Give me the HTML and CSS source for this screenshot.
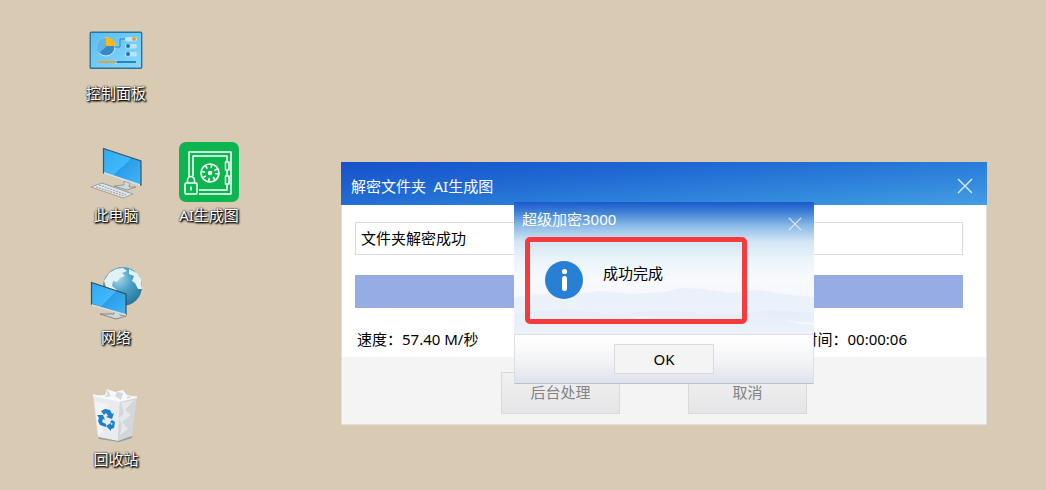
FILE: index.html
```html
<!DOCTYPE html>
<html lang="zh-CN">
<head>
  <meta charset="UTF-8">
  <meta name="viewport" content="width=device-width, initial-scale=1.0">
  <title>超级加密3000</title>
  <link rel="stylesheet" href="styles.css">
</head>
<body>
  <!-- Desktop icons -->
  <main class="desktop">
    <a class="shortcut first-col" href="#control-panel">
      <svg viewBox="0 0 60 60" aria-hidden="true">
        <defs>
          <linearGradient id="panel" x1="0" y1="0" x2="1" y2="1">
            <stop offset="0" stop-color="#58bdf0"/>
            <stop offset="1" stop-color="#8bd8fc"/>
          </linearGradient>
        </defs>
        <rect x="4.200" y="12.200" width="51.500" height="36" rx="1" fill="url(#panel)" stroke="#26749f" stroke-width="1.400"/>
        <circle cx="20" cy="27" r="9" fill="#3589c5" stroke="#c8e9fa"/>
        <path d="M20 27V18A9 9 0 0 0 13 33Z" fill="#62b3e4"/>
        <path d="M20 26V17A9.500 9.500 0 0 1 29.500 26Z" fill="#ffb719"/>
        <path d="M29 27H34V19H40" fill="none" stroke="#2f88b9"/>
        <rect x="39" y="17" width="12" height="4.500" rx="2" fill="#b8e6fc"/>
        <rect x="39" y="24" width="12" height="4.500" rx="2" fill="#b8e6fc"/>
        <rect x="39" y="32" width="12" height="4.500" rx="2" fill="#b8e6fc"/>
        <circle cx="48" cy="19" r="2" fill="#ef9a26"/>
        <circle cx="42" cy="26" r="2" fill="#23719d"/>
        <circle cx="42" cy="34" r="2" fill="#23719d"/>
        <path d="M12 42H50" stroke="#2685ba" stroke-width="2"/>
        <path d="M12 42H29" stroke="#dda345" stroke-width="2"/>
        <path d="M30 40V44" stroke="#c2eafd"/>
      </svg>
      <span>控制面板</span>
    </a>

    <a class="shortcut first-col" href="#computer">
      <svg viewBox="0 0 60 60" aria-hidden="true">
        <defs>
          <linearGradient id="screen" x1="0" y1="0" x2="1" y2="1">
            <stop offset="0" stop-color="#2caaf5"/>
            <stop offset="0.5" stop-color="#42b7fb"/>
            <stop offset="0.5" stop-color="#299de9"/>
            <stop offset="1" stop-color="#46b5f5"/>
          </linearGradient>
        </defs>
        <path d="M38 39L44 41L43 45L50 45L41 48L28 44L38 43Z" fill="#d1d7da" stroke="#7b858b" stroke-width=".7"/>
        <path d="M17.500 6.500L55 19V43L17.500 31Z" fill="url(#screen)" stroke="#375768" stroke-width="1.200"/>
        <path d="M18 32L54 44V42L18 30Z" fill="#d5e2e9"/>
        <path d="M16 41L47 52L37 56L5 45Z" fill="#e4e7e9" stroke="#8b959b" stroke-width=".8"/>
        <path d="M13 43L41 53M10 45L38 54M16 41L44 51" stroke="#9da6ab" stroke-width="1.200" stroke-dasharray="2 1"/>
      </svg>
      <span>此电脑</span>
    </a>

    <a class="shortcut" href="#folder">
      <svg viewBox="0 0 60 60" aria-hidden="true">
        <rect width="60" height="60" rx="7" fill="#0cb550"/>
        <g fill="none" stroke="#fff" stroke-width="1.500" stroke-linejoin="round">
          <path d="M10 35V10H52V52H20M14 34V14H48V48H20"/>
          <path d="M8.500 41V38A3.500 3.500 0 0 1 15.500 38V41"/>
          <rect x="6" y="41" width="12" height="11" rx="1"/>
          <path d="M12 44.500V48.500"/>
          <circle cx="31" cy="31" r="9" stroke-width="1.600"/>
          <circle cx="31" cy="31" r="6.500" stroke-width="3" stroke-dasharray="1.500 3.600"/>
          <circle cx="31" cy="31" r="1.500" fill="#fff"/>
          <path d="M46.500 20H50V28H46.500ZM46.500 34H50V42H46.500Z" fill="#0cb550"/>
        </g>
      </svg>
      <span>AI生成图</span>
    </a>

    <a class="shortcut first-col" href="#network">
      <svg viewBox="0 0 60 60" aria-hidden="true">
        <defs>
          <radialGradient id="globe" cx="0.4" cy="0.3" r="0.7">
            <stop offset="0" stop-color="#a4d6e9"/>
            <stop offset="0.5" stop-color="#4b9fc7"/>
            <stop offset="1" stop-color="#287a9f"/>
          </radialGradient>
        </defs>
        <circle cx="36.500" cy="22.500" r="19.500" fill="url(#globe)"/>
        <path d="M18 17L23 9L30 5L37 4L41 7L36 9L39 12L34 14L31 18L27 17L26 22L31 26L28 28L20 23ZM43 5L51 9L55 15L56 25L52 25L49 19L46 17L48 12L43 10Z" fill="#e2f1f3"/>
        <path d="M28 46L34 48L34 51L40 52L30 55L14 50L28 50Z" fill="#d2d8da" stroke="#6b777c" stroke-width=".8"/>
        <path d="M5.500 18.500L40 30V51L5.500 40Z" fill="url(#screen)" stroke="#3b4e58" stroke-width="1.200"/>
        <path d="M6 40L40 50V52L6 42Z" fill="#cfdee7"/>
      </svg>
      <span>网络</span>
    </a>

    <a class="shortcut first-col" href="#recycle">
      <svg viewBox="0 0 60 60" aria-hidden="true">
        <path d="M9 10L19 9L21 3L29 6L37 4L41 9L51 11L46 16L31 17Z" fill="#f7f8f9"/>
        <path d="M21 3L25 10L17 12L21 9ZM31 6L37 7L35 14L29 10ZM42 10L47 12L39 15Z" fill="#d3d9de"/>
        <path d="M7 9L34 15L32 55L12 51Z" fill="#e9ecee"/>
        <path d="M51 11L34 15L32 55L46 50Z" fill="#d3d7db"/>
        <path d="M7 9L34 15L51 11" fill="none" stroke="#fafbfc" stroke-width="1.400"/>
        <path d="M35 17L48 14L39 24L45 29L36 36L42 43L34 49L36 39L33 32L38 27Z" fill="#e6e8ea"/>
        <path d="M12 51L32 55L46 50V52L33 56L13 53Z" fill="#929da4"/>
        <path d="M9 15L24 19L17 24L14 30L17 46L12 49Z" fill="#f2f4f5"/>
        <g fill="#1c7fcb">
          <path d="M15 25L19 23L24 24L26 28L28 27L26 33L20 31L22 30L20 27L18 29Z"/>
          <path d="M11 29L17 29L19 34L17 33L16 36L20 38L20 41L14 39L12 35L13 32Z"/>
          <path d="M26 34L29 36L28 42L25 43V45L20 40L25 37V39L27 38L24 36Z"/>
        </g>
      </svg>
      <span>回收站</span>
    </a>
  </main>

  <!-- Decrypt window -->
  <section class="window">
    <header class="window-title">
      <h1>解密文件夹&ensp;AI生成图</h1>
      <button class="close" type="button" aria-label="关闭">
        <svg viewBox="0 0 16 16" aria-hidden="true"><path d="M1 1L15 15M15 1L1 15"/></svg>
      </button>
    </header>
    <div class="window-body">
      <input class="status" type="text" value="文件夹解密成功" aria-label="状态" readonly>
      <progress class="bar" max="100" value="100" aria-label="进度"></progress>
      <div class="stats">
        <p>速度：57.40 M/秒</p>
        <p>时间：00:00:06</p>
      </div>
    </div>
    <footer class="window-footer">
      <button type="button" disabled>后台处理</button>
      <button type="button" disabled>取消</button>
    </footer>

    <!-- Message box over the window -->
    <div class="dialog" role="dialog" aria-labelledby="dialog-title">
      <header class="dialog-title">
        <h2 id="dialog-title">超级加密3000</h2>
        <button class="close small" type="button" aria-label="关闭">
          <svg viewBox="0 0 16 16" aria-hidden="true"><path d="M1 1L15 15M15 1L1 15"/></svg>
        </button>
      </header>
      <svg class="hills" viewBox="0 0 300 50" preserveAspectRatio="none" aria-hidden="true">
        <defs>
          <linearGradient id="haze" x1="0" y1="0" x2="0" y2="1">
            <stop offset="0" stop-color="#dde8f6" stop-opacity=".5"/>
            <stop offset="1" stop-color="#e9f0fa" stop-opacity=".2"/>
          </linearGradient>
        </defs>
        <path d="M0 14L25 10L55 12L85 7L120 10L150 8L168 4L190 5L215 9L245 6L275 11L300 13V50H0Z" fill="url(#haze)"/>
        <path d="M0 30L50 25L100 30L150 26L210 31L260 26L300 29V50H0Z" fill="url(#haze)"/>
        <path d="M108 31L125 33L145 32L130 35ZM272 36L286 38L300 38V41L284 40Z" fill="#fff" opacity=".5"/>
      </svg>
      <div class="message">
        <svg class="info" viewBox="0 0 38 38" aria-hidden="true">
          <circle cx="19" cy="19" r="19" fill="#277fd6"/>
          <circle cx="19.500" cy="10.500" r="2.600" fill="#fff"/>
          <rect x="17" y="15" width="5" height="15" rx="2.500" fill="#fff"/>
        </svg>
        <p>成功完成</p>
      </div>
      <footer class="dialog-footer">
        <button type="button">OK</button>
      </footer>
    </div>
  </section>
</body>
</html>
```
FILE: styles.css
```css
* {
  margin: 0;
  padding: 0;
  box-sizing: border-box;
}

body {
  min-height: 100vh;
  background-color: #d9cab3;
  color: #000;
  font-family: "Noto Sans", "Noto Sans CJK SC", sans-serif;
  font-size: 15px;
  line-height: 20px;
}

button,
input {
  font: inherit;
}

h1,
h2 {
  color: #fff;
  font-size: 15px;
  font-weight: 400;
}

/* Desktop icons */
.desktop {
  display: grid;
  grid-template-columns: 92px 92px;
  column-gap: 1px;
  row-gap: 39px;
  padding: 20px 0 0 70px;
}

.shortcut {
  display: flex;
  flex-direction: column;
  align-items: center;
  gap: 3px;
  color: #fff;
  text-decoration: none;
  text-shadow: 1px 1px 2px #000, 1px 1px 2px #000, 0 0 2px #000;
}

.first-col {
  grid-column: 1;
}

.shortcut svg {
  width: 60px;
  height: 60px;
}

/* Decrypt window */
.window {
  position: absolute;
  top: 162px;
  left: 341px;
  right: 59px;
  background-color: #fff;
  box-shadow: inset 0 0 0 1px #e2e0dc;
}

.window-title {
  display: flex;
  align-items: center;
  justify-content: space-between;
  height: 43px;
  padding: 5px 14px 0 10px;
  background: linear-gradient(175deg, #1751ca, #1f69d3 35%, #2f86db 70%, #459de4);
}

.close {
  width: 16px;
  height: 16px;
  border: none;
  background: none;
  cursor: pointer;
}

.close svg {
  display: block;
  fill: none;
  stroke: #dcecfb;
  stroke-width: 1.4;
}

.window-body {
  display: flex;
  flex-direction: column;
  gap: 20px;
  padding: 17px 24px 8px 14px;
}

.status {
  width: 100%;
  height: 33px;
  padding: 0 5px 2px;
  border: 1px solid #d8d9db;
  background-color: #fff;
}

.bar {
  width: 100%;
  height: 33px;
  border: none;
  background-color: #96ade3;
  appearance: none;
}

.bar::-webkit-progress-bar,
.bar::-webkit-progress-value {
  background-color: #96ade3;
}

.stats {
  display: flex;
  justify-content: space-between;
  padding: 1px 56px 0 2px;
}

.window-footer {
  display: flex;
  justify-content: center;
  gap: 68px;
  margin: 0 1px;
  padding: 15px 20px 10px 0;
  border-bottom: 1px solid #e2e0dc;
  background-color: #f4f4f4;
}

.window-footer button {
  width: 119px;
  height: 42px;
  padding-bottom: 2px;
  border: 1px solid #d9d9da;
  background: linear-gradient(#f1f1f1, #e5e5e8);
  color: #838383;
}

/* Message box */
.dialog {
  position: absolute;
  top: 40px;
  left: 50%;
  width: 300px;
  transform: translateX(-50%);
  background: linear-gradient(#1b59cb, #3d80d6 10px, #8dbae7 24px, #d4e7f5 40px, #edf5fa 60px, #f8fafd 80px, #edf3fb 120px);
}

.dialog-title {
  display: flex;
  justify-content: space-between;
  height: 35px;
  padding: 7px 12px 0 8px;
}

.close.small {
  width: 14px;
  height: 14px;
  margin-top: 8px;
}

.hills {
  position: absolute;
  top: 82px;
  left: 0;
  width: 100%;
  height: 50px;
}

.message {
  position: relative;
  display: flex;
  gap: 20px;
  width: 222px;
  margin: 0 0 10px 11px;
  padding: 19px 15px 20px;
  border: 5px solid #f63b3e;
  border-radius: 5px;
}

.info {
  width: 38px;
  height: 38px;
}

.message p {
  padding-top: 2px;
}

.dialog-footer {
  position: relative;
  display: flex;
  justify-content: center;
  padding: 9px;
  border: 1px solid #dcdfe4;
  border-bottom-color: #b5c1d4;
  background: linear-gradient(#fff, #f4f5f8 50%, #dfe2ea);
}

.dialog-footer button {
  width: 100px;
  height: 30px;
  border: 1px solid #d9dadc;
  background-color: #f4f4f4;
  cursor: pointer;
}
```
